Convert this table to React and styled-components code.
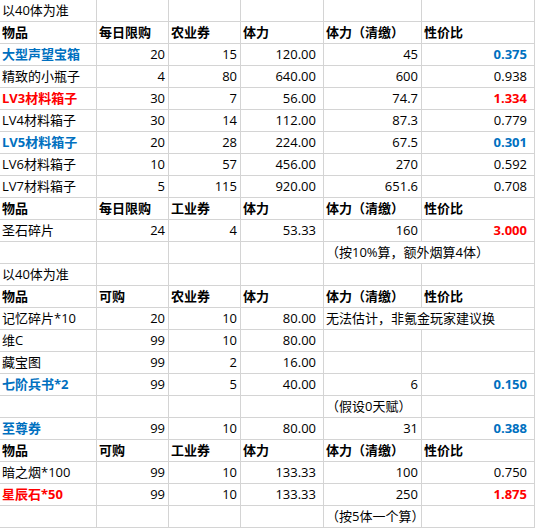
import React from "react";
import styled, { createGlobalStyle } from "styled-components";

const GlobalStyle = createGlobalStyle`
  html, body {
    margin: 0;
    padding: 0;
    background: #ffffff;
  }
  body {
    font-family: "Open Sans", "Noto Sans CJK SC", sans-serif;
    font-size: 13px;
    color: #000;
  }
`;

const Sheet = styled.div`
  display: grid;
  grid-template-columns: 97px 72px 72px 83px 98px 113px;
  grid-auto-rows: 22px;
  width: 535px;
`;

const toneColor = {
  plain: "#000000",
  blue: "#0070c0",
  red: "#ff0000",
};

const Cell = styled.div`
  box-sizing: border-box;
  grid-column: span ${(p) => p.$span || 1};
  border-right: 1px solid #d4d4d4;
  border-bottom: 1px solid #d4d4d4;
  padding: 0 ${(p) => (p.$pad ? 7 : 3)}px 0 2px;
  line-height: 21px;
  white-space: nowrap;
  overflow: hidden;
  text-align: ${(p) => (p.$num ? "right" : "left")};
  color: ${(p) => toneColor[p.$tone || "plain"]};
  font-weight: ${(p) => (p.$bold ? 700 : 400)};
`;

// column padding: D and F numbers carry a trailing-space number format
const padCols = [false, false, false, true, false, true];

const H = (a, b, c) => ({
  header: true,
  cells: ["物品", a, b, "体力", "体力（清缴）", "性价比"],
});

const D = (name, tone, b, c, d, e, f) => ({
  cells: [name, b, c, d, e, f],
  tone,
});

const rows = [
  { cells: ["以40体为准", "", "", "", "", ""] },
  H("每日限购", "农业券"),
  D("大型声望宝箱", "blue", "20", "15", "120.00", "45", "0.375"),
  D("精致的小瓶子", null, "4", "80", "640.00", "600", "0.938"),
  D("LV3材料箱子", "red", "30", "7", "56.00", "74.7", "1.334"),
  D("LV4材料箱子", null, "30", "14", "112.00", "87.3", "0.779"),
  D("LV5材料箱子", "blue", "20", "28", "224.00", "67.5", "0.301"),
  D("LV6材料箱子", null, "10", "57", "456.00", "270", "0.592"),
  D("LV7材料箱子", null, "5", "115", "920.00", "651.6", "0.708"),
  { header: true, cells: ["物品", "每日限购", "工业券", "体力", "体力（清缴）", "性价比"] },
  D("圣石碎片", "redValue", "24", "4", "53.33", "160", "3.000"),
  { note: "（按10%算，额外烟算4体）", span: 2 },
  { cells: ["以40体为准", "", "", "", "", ""] },
  { header: true, cells: ["物品", "可购", "农业券", "体力", "体力（清缴）", "性价比"] },
  { cells: ["记忆碎片*10", "20", "10", "80.00"], note: "无法估计，非氪金玩家建议换", span: 2, inline: true },
  D("维C", null, "99", "10", "80.00", "", ""),
  D("藏宝图", null, "99", "2", "16.00", "", ""),
  D("七阶兵书*2", "blue", "99", "5", "40.00", "6", "0.150"),
  { note: "（假设0天赋）", span: 1 },
  D("至尊券", "blue", "99", "10", "80.00", "31", "0.388"),
  { header: true, cells: ["物品", "可购", "工业券", "体力", "体力（清缴）", "性价比"] },
  D("暗之烟*100", null, "99", "10", "133.33", "100", "0.750"),
  D("星辰石*50", "red", "99", "10", "133.33", "250", "1.875"),
  { note: "（按5体一个算）", span: 1 },
];

function renderRow(row, r) {
  const out = [];
  if (row.note && !row.inline) {
    for (let i = 0; i < 4; i++) out.push(<Cell key={`${r}-${i}`} />);
    out.push(
      <Cell key={`${r}-n`} $span={row.span}>
        {row.note}
      </Cell>
    );
    if (row.span === 1) out.push(<Cell key={`${r}-f`} />);
    return out;
  }
  if (row.inline) {
    row.cells.forEach((t, i) =>
      out.push(
        <Cell key={`${r}-${i}`} $num={i > 0} $pad={padCols[i]}>
          {t}
        </Cell>
      )
    );
    out.push(
      <Cell key={`${r}-n`} $span={row.span}>
        {row.note}
      </Cell>
    );
    return out;
  }
  row.cells.forEach((t, i) => {
    const isName = i === 0;
    const isRatio = i === 5;
    let tone = "plain";
    let bold = !!row.header;
    if (!row.header) {
      if ((row.tone === "blue" || row.tone === "red") && (isName || isRatio)) {
        tone = row.tone;
        bold = true;
      }
      if (row.tone === "redValue" && isRatio) {
        tone = "red";
        bold = true;
      }
    }
    const numeric = !row.header && i > 0 && r !== 0 && r !== 12;
    out.push(
      <Cell
        key={`${r}-${i}`}
        $num={numeric}
        $pad={numeric && padCols[i]}
        $tone={tone}
        $bold={bold}
      >
        {t}
      </Cell>
    );
  });
  return out;
}

export default function App() {
  return (
    <>
      <GlobalStyle />
      <Sheet>{rows.map((row, r) => renderRow(row, r))}</Sheet>
    </>
  );
}
